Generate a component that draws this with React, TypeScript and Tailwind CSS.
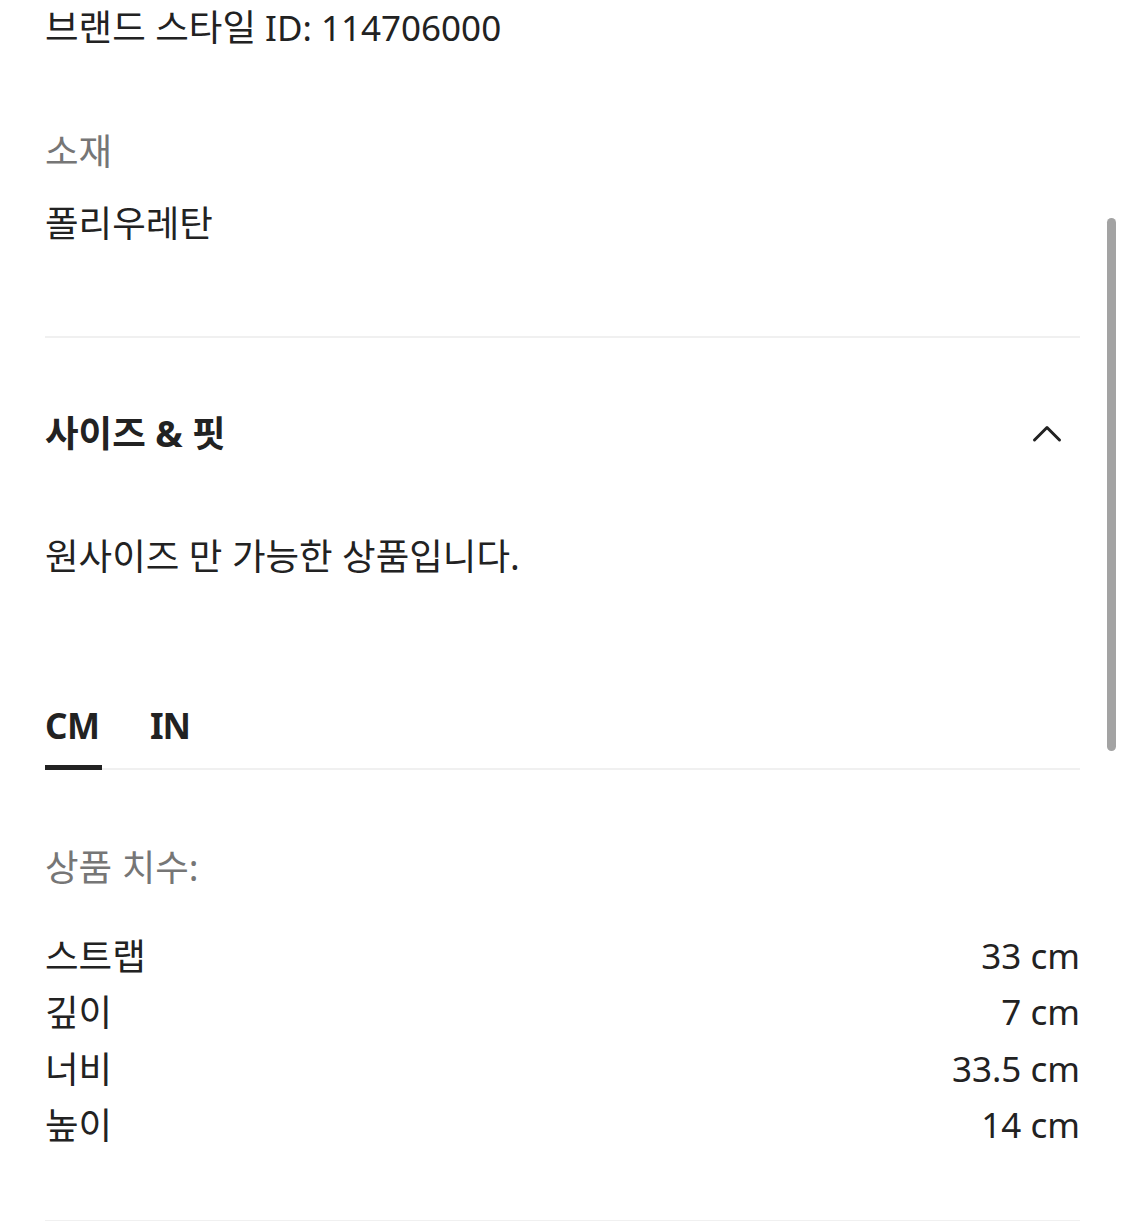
import React from "react";

const rows = [
  { label: "스트랩", value: "33 cm" },
  { label: "깊이", value: "7 cm" },
  { label: "너비", value: "33.5 cm" },
  { label: "높이", value: "14 cm" },
];

export default function App() {
  return (
    <div
      className="relative w-[1125px] h-[1221px] overflow-hidden bg-white text-[#222222]"
      style={{ fontFamily: '"Noto Sans", "Noto Sans CJK KR", sans-serif' }}
    >
      <div className="pl-[45px] pr-[45px]">
        <p className="text-[35px] leading-[54px]">
          <span className="text-[36.5px]">브랜드 스타일</span> ID: 114706000
        </p>

        <p className="mt-[68px] text-[36.5px] leading-[56px] text-[#767676]">소재</p>
        <p className="mt-[16px] text-[36.5px] leading-[56px]">폴리우레탄</p>

        <div className="mt-[85px] h-[2px] bg-[#f0f0f0]" />

        <div className="mt-[67px] flex items-center justify-between">
          <h2 className="text-[36.5px] leading-[56px] font-bold">사이즈 &amp; 핏</h2>
          <svg
            className="mr-[18px]"
            width="30"
            height="20"
            viewBox="0 0 30 20"
            fill="none"
            stroke="#222222"
            strokeWidth="3"
            strokeLinecap="round"
            strokeLinejoin="round"
          >
            <path d="M2.5 17 L15 4.5 L27.5 17" />
          </svg>
        </div>

        <p className="mt-[67px] text-[36.5px] leading-[56px]">원사이즈 만 가능한 상품입니다.</p>

        <div className="mt-[114px] flex items-end border-b-2 border-[#f0f0f0]">
          <div className="flex flex-col">
            <span className="text-[35px] leading-[56px] font-bold tracking-[-0.5px]">CM</span>
            <span className="mt-[11px] -mb-[2px] h-[5px] w-[57px] bg-[#222222]" />
          </div>
          <div className="ml-[48px] flex flex-col">
            <span className="text-[35px] leading-[56px] font-bold tracking-[-1px]">IN</span>
            <span className="mt-[11px] -mb-[2px] h-[5px]" />
          </div>
        </div>

        <p className="mt-[69px] text-[36.5px] leading-[56px] text-[#767676]">상품 치수:</p>

        <div className="mt-[33px] flex flex-col">
          {rows.map((r) => (
            <div key={r.label} className="flex items-center justify-between h-[56.3px]">
              <span className="text-[36.5px] leading-[56px]">{r.label}</span>
              <span className="text-[35px] leading-[56px]">{r.value}</span>
            </div>
          ))}
        </div>

        <div className="mt-[67px] h-[2px] bg-[#f0f0f0]" />
      </div>

      {/* overlay scrollbar */}
      <div className="absolute left-[1107px] top-[218px] h-[533px] w-[9px] rounded-full bg-[#a3a3a3]" />
    </div>
  );
}
